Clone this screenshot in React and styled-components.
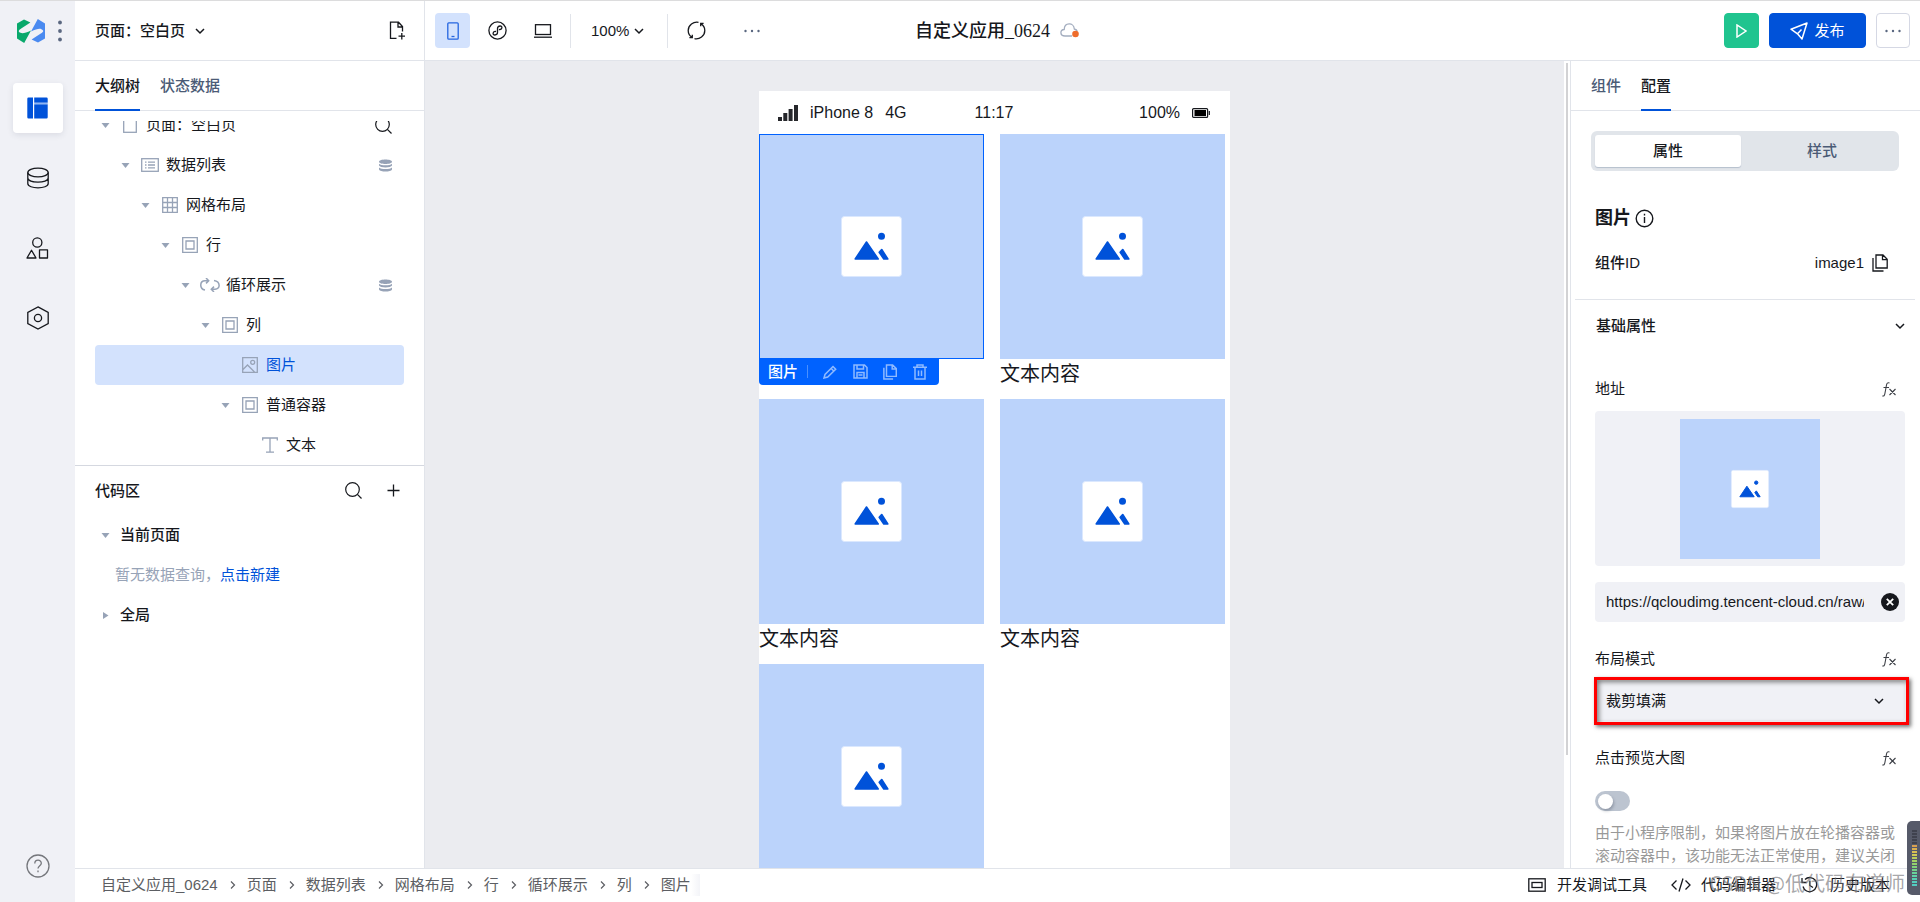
import { useState } from "react";
import styled, { createGlobalStyle } from "styled-components";

const GlobalStyle = createGlobalStyle`
  * {
    box-sizing: border-box;
  }
  body {
    margin: 0;
    font-family: "Liberation Sans", "Noto Sans CJK SC", sans-serif;
    font-size: 15px;
    line-height: 20px;
    color: #16181d;
    background-color: white;
  }
  button, input, select {
    font: inherit;
    color: inherit;
  }
  svg {
    display: block;
    flex-shrink: 0;
  }
`;

const Shell = styled.div`
  display: grid;
  grid-template-columns: 75px minmax(0, 1fr);
  height: 100vh;
  border-top: 1px solid #dcdcdd;
  overflow: hidden;
`;
const Rail = styled.nav`
  display: flex;
  flex-direction: column;
  align-items: center;
  background-color: #f0f1f6;
  padding-bottom: 24px;
`;
const Brand = styled.div`
  display: flex;
  align-items: center;
  align-self: stretch;
  gap: 13px;
  height: 60px;
  padding-left: 17px;
  margin-bottom: 22px;
`;
const RailMenu = styled.div`
  display: flex;
  flex-direction: column;
  gap: 20px;
  flex: 1;
`;
const RailButton = styled.button`
  display: flex;
  align-items: center;
  justify-content: center;
  width: 50px;
  height: 50px;
  padding: 0;
  border: none;
  border-radius: 4px;
  background-color: ${(props) => (props.$active ? "white" : "transparent")};
  box-shadow: ${(props) =>
    props.$active ? "0 2px 6px rgba(30, 40, 70, 0.1)" : "none"};
`;
const PlainButton = styled.button`
  display: flex;
  align-items: center;
  gap: ${(props) => props.$gap || 0}px;
  padding: 0;
  border: none;
  background: none;
  font-weight: ${(props) => (props.$strong ? 500 : 400)};
`;

const Main = styled.div`
  display: flex;
  flex-direction: column;
  min-height: 0;
`;
const Header = styled.header`
  display: flex;
  height: 60px;
  border-bottom: 1px solid #e1e4ea;
`;
const PageBar = styled.div`
  display: flex;
  align-items: center;
  justify-content: space-between;
  width: 350px;
  padding: 0 18px 0 20px;
  border-right: 1px solid #e1e4ea;
`;
const Toolbar = styled.div`
  display: flex;
  align-items: center;
  flex: 1;
  padding: 0 10px;
`;
const Tools = styled.div`
  display: flex;
  align-items: center;
  flex: 1 1 0;
`;
const ToolButton = styled.button`
  display: flex;
  align-items: center;
  justify-content: center;
  width: 35px;
  height: 35px;
  margin-right: ${(props) => props.$after || 10}px;
  padding: 0;
  border: none;
  border-radius: 4px;
  background-color: ${(props) => (props.$active ? "#d3e2fd" : "transparent")};
`;
const Divider = styled.span`
  width: 1px;
  height: 34px;
  margin-right: ${(props) => props.$after}px;
  background-color: #e1e4ea;
`;
const Zoom = styled(PlainButton)`
  margin-right: 23px;
`;
const Title = styled.h1`
  display: flex;
  align-items: center;
  gap: 10px;
  margin: 0;
  font-family: "Liberation Serif", "Noto Sans CJK SC", serif;
  font-size: 18px;
  font-weight: 500;
  line-height: 24px;
`;
const Filler = styled.div`
  flex: 1 1 0;
`;
const Actions = styled.div`
  display: flex;
  align-items: center;
  justify-content: flex-end;
  gap: 10px;
  width: 350px;
  padding-right: 10px;
`;
const ActionButton = styled.button`
  display: flex;
  align-items: center;
  justify-content: center;
  gap: 6px;
  width: ${(props) => props.$width}px;
  height: 35px;
  padding: 0;
  border: 1px solid ${(props) => props.$line || props.$bg};
  border-radius: 4px;
  background-color: ${(props) => props.$bg};
  color: white;
`;

const Body = styled.div`
  display: flex;
  flex: 1;
  min-height: 0;
`;
const Outline = styled.aside`
  display: flex;
  flex-direction: column;
  width: 350px;
  border-right: 1px solid #e1e4ea;
`;
const Tabs = styled.div`
  display: flex;
  flex-shrink: 0;
  gap: 20px;
  height: 50px;
  padding: 0 20px;
  border-bottom: 1px solid #e1e4ea;
`;
const Tab = styled.button`
  height: 50px;
  padding: 2px 0 0;
  border: none;
  border-bottom: 2px solid
    ${(props) => (props.$active ? "#0052d9" : "transparent")};
  background: none;
  font-weight: 500;
  color: ${(props) => (props.$active ? "#16181d" : "#4b5b76")};
`;
const TreePane = styled.div`
  flex: 0 0 355px;
  min-height: 0;
  padding: 10px 20px 0;
  border-bottom: 1px solid #d5d8e0;
`;
const TreeList = styled.div`
  display: flex;
  flex-direction: column;
  justify-content: flex-end;
  height: 100%;
  overflow: hidden;
`;
const TreeRow = styled.div`
  display: flex;
  align-items: center;
  flex: 0 0 40px;
  padding: 0 12px 0 ${(props) => props.$depth * 20}px;
  border-radius: 4px;
  background-color: ${(props) => (props.$active ? "#d3e2fd" : "transparent")};
  color: ${(props) => (props.$active ? "#0052d9" : "#16181d")};
`;
const CaretBox = styled.span`
  display: flex;
  justify-content: center;
  width: 20px;
  margin-right: 5px;
`;
const TreeIcon = styled.span`
  display: flex;
  justify-content: center;
  width: 20px;
  margin-right: 6px;
`;
const TreeLabel = styled.span`
  flex: 1;
`;
const CodePane = styled.div`
  padding: 0 20px;
`;
const CodeHead = styled.div`
  display: flex;
  align-items: center;
  justify-content: space-between;
  height: 49px;
  font-weight: 500;
`;
const CodeTools = styled.div`
  display: flex;
  gap: 25px;
  padding-right: 4px;
`;
const CodeRow = styled.div`
  display: flex;
  align-items: center;
  height: 40px;
  font-weight: 500;
`;
const CodeEmpty = styled.div`
  display: flex;
  align-items: center;
  height: 40px;
  padding-left: 20px;
  color: #97a3b7;
`;
const Link = styled.a`
  color: #0052d9;
  text-decoration: none;
`;

const Canvas = styled.main`
  flex: 1;
  display: flex;
  justify-content: center;
  padding-top: 30px;
  background-color: #ebecf0;
  overflow: hidden;
`;
const Phone = styled.div`
  width: 471px;
  height: max-content;
  min-height: 100%;
  background-color: white;
`;
const StatusBar = styled.div`
  display: grid;
  grid-template-columns: 1fr auto 1fr;
  align-items: center;
  height: 43px;
  padding: 0 20px 0 19px;
  font-size: 16px;
`;
const StatusSide = styled.div`
  display: flex;
  align-items: center;
  justify-content: ${(props) => (props.$end ? "flex-end" : "flex-start")};
  gap: 12px;
`;
const CardGrid = styled.div`
  display: grid;
  grid-template-columns: 1fr 1fr;
  gap: 10px 16px;
  padding-right: 5px;
`;
const Card = styled.div`
  position: relative;
`;
const Picture = styled.div`
  outline: ${(props) => (props.$active ? "1px solid #0062ff" : "none")};
  outline-offset: -1px;
`;
const Caption = styled.div`
  height: 30px;
  font-size: 20px;
  line-height: 30px;
`;
const NodeMenu = styled.div`
  position: absolute;
  left: 0;
  top: 225px;
  display: flex;
  align-items: center;
  width: 180px;
  height: 26px;
  padding: 0 4px 1px 9px;
  border-radius: 0 0 4px 4px;
  background-color: #0062ff;
  color: white;
  font-weight: 500;
  white-space: nowrap;
`;
const NodeMenuLine = styled.span`
  width: 1px;
  height: 13px;
  margin: 0 7px 0 9px;
  background-color: #4a90ff;
`;
const NodeButton = styled.button`
  display: flex;
  justify-content: center;
  width: 30px;
  padding: 0;
  border: none;
  background: none;
`;

const ScrollTrack = styled.div`
  display: flex;
  justify-content: center;
  width: 6px;
  padding-top: 2px;
`;
const ScrollThumb = styled.div`
  width: 2px;
  height: 86%;
  background-color: #d2d2d4;
`;
const Settings = styled.aside`
  width: 350px;
  border-left: 1px solid #e1e4ea;
  overflow: hidden;
`;
const Segment = styled.div`
  display: flex;
  gap: 8px;
  height: 40px;
  margin: 20px 21px 0 20px;
  padding: 4px;
  border-radius: 6px;
  background-color: #e1e5ea;
`;
const SegmentButton = styled.button`
  flex: ${(props) => (props.$active ? "0 0 146px" : "1")};
  padding: 0;
  border: none;
  border-radius: 3px;
  font-weight: 500;
  background-color: ${(props) => (props.$active ? "white" : "transparent")};
  box-shadow: ${(props) => (props.$active ? "0 1px 1px #b5bfcd" : "none")};
  color: ${(props) => (props.$active ? "#16181d" : "#4b5b76")};
`;
const Group = styled.div`
  padding: 0 15px 0 24px;
`;
const ComponentName = styled.h2`
  display: flex;
  align-items: center;
  gap: 4px;
  height: 30px;
  margin: 32px 0 15px;
  font-size: 18px;
  font-weight: 700;
`;
const IdRow = styled.div`
  display: flex;
  align-items: center;
  justify-content: space-between;
  height: 30px;
  margin-bottom: 21px;
  padding-right: 17px;
`;
const Strong = styled.span`
  font-weight: 500;
`;
const SectionHead = styled.div`
  display: flex;
  align-items: center;
  justify-content: space-between;
  height: 53px;
  margin: 0 5px 0 4px;
  padding: 0 10px 0 21px;
  border-top: 1px solid #e1e4ea;
  font-weight: 500;
`;
const FieldHead = styled.div`
  display: flex;
  align-items: center;
  justify-content: space-between;
  height: 30px;
  margin: 22px 0 7px;
  padding-right: 8px;
`;
const Preview = styled.div`
  display: flex;
  justify-content: center;
  height: 155px;
  padding-top: 8px;
  border-radius: 4px;
  background-color: #f0f1f6;
`;
const PreviewPicture = styled.div`
  width: 140px;
`;
const UrlField = styled.div`
  display: flex;
  align-items: center;
  gap: 17px;
  height: 40px;
  margin-top: 16px;
  padding: 0 6px 0 11px;
  border-radius: 4px;
  background-color: #f0f1f6;
`;
const UrlInput = styled.input`
  flex: 1;
  min-width: 0;
  padding: 0;
  border: none;
  outline: none;
  background: none;
`;
const SelectField = styled.div`
  position: relative;
  display: flex;
  align-items: center;
  height: 40px;
  border-radius: 4px;
  background-color: #f0f1f6;
`;
const Select = styled.select`
  appearance: none;
  width: 100%;
  height: 40px;
  padding: 0 40px 0 11px;
  border: none;
  background: none;
`;
const SelectArrow = styled.span`
  position: absolute;
  right: 21px;
  pointer-events: none;
`;
const Highlight = styled.span`
  position: absolute;
  inset: -4px -4px -4px -1px;
  border: 3px solid #ff0000;
  box-shadow: 2px 2px 4px rgba(0, 0, 0, 0.55),
    inset 2px 2px 5px rgba(0, 0, 0, 0.5);
  pointer-events: none;
`;
const Switch = styled.input`
  appearance: none;
  display: flex;
  align-items: center;
  width: 35px;
  height: 20px;
  margin: 18px 0 10px;
  padding: 0 3px;
  border-radius: 10px;
  background-color: ${(props) => (props.checked ? "#0052d9" : "#bcc4d0")};
  justify-content: ${(props) => (props.checked ? "flex-end" : "flex-start")};
  &::before {
    content: "";
    width: 15px;
    height: 15px;
    border-radius: 50%;
    background-color: white;
    box-shadow: 1px 2px 3px rgba(60, 70, 90, 0.35);
  }
`;
const Hint = styled.p`
  margin: 0;
  padding-right: 6px;
  line-height: 23px;
  color: #999;
`;

const Footer = styled.footer`
  position: relative;
  display: flex;
  align-items: center;
  justify-content: space-between;
  flex: 0 0 34px;
  padding: 0 30px 2px 26px;
  border-top: 1px solid #e1e4ea;
`;
const Crumbs = styled.nav`
  display: flex;
  align-items: center;
  gap: 10px;
`;
const Crumb = styled.a`
  color: #5c5e63;
  text-decoration: none;
`;
const CrumbFade = styled.span`
  width: 9px;
  height: 22px;
  margin-left: -10px;
  background: linear-gradient(to right, white, #f3f4f8);
`;
const FooterTools = styled.div`
  display: flex;
  gap: 24px;
`;
const Watermark = styled.span`
  position: absolute;
  right: 15px;
  top: 0;
  font-family: "Noto Sans CJK SC", sans-serif;
  font-size: 20px;
  line-height: 28px;
  color: rgba(110, 110, 114, 0.62);
  pointer-events: none;
`;
const Meter = styled.div`
  position: fixed;
  right: 0;
  bottom: 7px;
  display: flex;
  flex-direction: column;
  align-items: center;
  gap: 1px;
  width: 13px;
  height: 74px;
  padding: 9px 2px 0 4px;
  border-radius: 5px 0 0 5px;
  background-color: #565a69;
`;
const MeterBar = styled.span`
  width: 5px;
  height: 2px;
  background-color: ${(props) => props.$color};
`;

const Svg = ({ w = 20, h = w, box, color = "#16181d", sw = 1.3, children }) => (
  <svg
    width={w}
    height={h}
    viewBox={box || `0 0 ${w} ${h}`}
    fill="none"
    stroke={color}
    strokeWidth={sw}
    aria-hidden="true"
  >
    {children}
  </svg>
);

const muted = "#97a3b7";

const Logo = () => {
  const half =
    "M0 4.6 7 .4 13.4 3.6 4.2 9.4C1.2 11.4 1 12.6 3.6 13.8 5.8 14.8 9 13.6 14 11.4L7.2 24 0 19.6Z";
  return (
    <Svg w={28} h={24} sw={0}>
      <path d={half} fill="#08a86b" />
      <path d={half} fill="#4a8af0" transform="rotate(180 14 12)" />
    </Svg>
  );
};
const Dots = ({ color = "#5a6780", vertical, w = 18 }) => (
  <Svg w={vertical ? 4 : w} h={vertical ? 22 : 4} sw={0}>
    {[0, 1, 2].map((i) =>
      vertical ? (
        <circle key={i} cx="2" cy={2.5 + i * 8.5} r="1.9" fill={color} />
      ) : (
        <circle key={i} cx={w / 2 + (i - 1) * 6.5} cy="2" r="1.2" fill={color} />
      )
    )}
  </Svg>
);
const Chevron = ({ right, color }) => (
  <Svg w={right ? 9 : 10} h={10} sw={right ? 1.2 : 1.5} color={color}>
    <path d={right ? "M3 1.5 6.500 5 3 8.5" : "M1 3 5 7 9 3"} />
  </Svg>
);
const Caret = ({ right }) => (
  <Svg w={9} h={9} sw={0}>
    <path d={right ? "M2 1V8L7.500 4.500Z" : "M.5 2H8.500L4.500 7Z"} fill={muted} />
  </Svg>
);
const SearchIcon = () => (
  <Svg w={17} sw={1.2}>
    <circle cx="7.500" cy="7.500" r="6.800" />
    <path d="M12.400 12.400 16.500 16.500" />
  </Svg>
);
const PlusIcon = () => (
  <Svg w={13} h={17}>
    <path d="M6.500 2.500V14.500M.5 8.500H12.500" />
  </Svg>
);
const StackIcon = () => (
  <Svg w={13} sw={0}>
    <path
      fill={muted}
      d="M0 2.700C0-.3 13-.3 13 2.700S0 5.700 0 2.700ZM0 4.700C2 6.700 11 6.700 13 4.700V6.500C12 9 1 9 0 6.500ZM0 8.600C2 10.600 11 10.600 13 8.600V10.400C12 13.200 1 13.200 0 10.400Z"
    />
  </Svg>
);
const LayoutIcon = () => (
  <Svg w={21} h={22} sw={0}>
    <path
      fill="#0052d9"
      d="M1.500.5H6V21.500H1.500Q.3 21.500.3 20.300V1.700Q.3.5 1.500.5ZM7.200.5H19.500Q20.700.5 20.700 1.700V5.800H7.200ZM7.200 7.200H20.700V20.300Q20.700 21.500 19.500 21.500H7.200Z"
    />
    <path fill="#8fb5f2" d="M7.200 5.800H20.700V7.200H7.200Z" />
  </Svg>
);
const DataIcon = () => (
  <Svg w={22} h={22}>
    <ellipse cx="11" cy="5.500" rx="10.200" ry="4.400" />
    <path d="M.8 5.500V16.500C.8 22.300 21.200 22.300 21.200 16.500V5.500M.8 11C.8 16.500 21.200 16.500 21.200 11" />
  </Svg>
);
const ShapesIcon = () => (
  <Svg w={23} h={22}>
    <circle cx="11.300" cy="5.500" r="4.600" />
    <path d="M5.500 13.200 10 21H1ZM13.500 12.800H21.500V21H13.500Z" strokeLinejoin="round" />
  </Svg>
);
const HexIcon = () => (
  <Svg w={22} h={24}>
    <path d="M11 .9 21.200 6.500V17.500L11 23.100.8 17.500V6.500Z" />
    <circle cx="11" cy="12" r="3.600" />
  </Svg>
);
const HelpIcon = () => (
  <Svg w={24} color="#75777c">
    <circle cx="12" cy="12" r="11" />
    <path d="M8.800 9.600C8.800 5 15.300 5.200 15.300 9.200 15.300 11.600 12 11.800 12 14.600M12 16.500V18.300" />
  </Svg>
);
const NewPageIcon = () => (
  <Svg w={17} h={19}>
    <path d="M7.500 17.300H1.500V1.200H9.500L13.500 5.500V10.500M9 1.200V6H13.500M12.800 12V18.500M9.500 15.200H16" />
  </Svg>
);
const PhoneIcon = () => (
  <Svg w={12} h={18} color="#2465e0">
    <rect x=".8" y=".8" width="10.400" height="16.400" rx="1" />
    <path d="M4.500 14.500H7.500" />
  </Svg>
);
const MiniAppIcon = () => (
  <Svg w={19}>
    <circle cx="9.500" cy="9.500" r="8.600" />
    <path d="M8.100 10.500C5 9.700 3.800 14 6.900 14 8.700 14 9.500 13 9.500 11.600V7.400C9.500 6 10.300 5 12.100 5 15.200 5 14 9.300 10.900 8.500" />
  </Svg>
);
const LaptopIcon = () => (
  <Svg w={18} h={14}>
    <rect x="1.500" y=".7" width="15" height="9.800" />
    <path d="M0 13.200H18" />
  </Svg>
);
const RefreshIcon = () => (
  <Svg w={19}>
    <path d="M11.500 1.300C6.500.3 1.200 4 1.200 9.500 1.200 12.500 2.800 15 5.200 16.400M5.300 13.700V16.600H2.400M7.500 17.700C12.500 18.700 17.800 15 17.800 9.500 17.800 6.500 16.200 4 13.800 2.600M13.700 5.300V2.400H16.600" />
  </Svg>
);
const CloudIcon = () => (
  <Svg w={20} h={15} color="#a3adbf">
    <path d="M12 13H5C-.3 13-.3 6.800 4.200 6.500 4.500-.8 13.800-.8 14.300 6 16 6.300 17 7.300 17.300 8.500" />
    <circle cx="15.500" cy="11" r="3.300" fill="#ee6c2c" stroke="none" />
  </Svg>
);
const PlayIcon = () => (
  <Svg w={11} h={14} color="white" sw={1.5}>
    <path d="M1 1V13L10 7Z" />
  </Svg>
);
const SendIcon = () => (
  <Svg w={18} color="white" sw={1.5}>
    <path d="M1 7.200 17 1 12 17 7.500 11.800ZM7.500 11.800 11.500 7.500M7.500 11.800 1 7.200" strokeLinejoin="round" />
  </Svg>
);
const InfoIcon = () => (
  <Svg w={19} sw={1.4}>
    <circle cx="9.500" cy="9.500" r="8.300" />
    <path d="M9.500 8V14M9.500 4.800V6.500" />
  </Svg>
);
const CopyIcon = ({ color, w = 16, h = 18, sw }) => (
  <Svg w={w} h={h} box="0 0 16 18" color={color} sw={sw}>
    <path d="M4 1H11L15.200 5.200V14H4ZM10.500 1V5.700H15.200M1 4V17H11.500" />
  </Svg>
);
const FxIcon = () => (
  <Svg w={15} h={15} sw={1.1} color="#3c3f46">
    <path d="M7.500 1C5.500.2 4.800 1.300 4.500 3L2.800 12C2.500 13.600 1.800 14.300.3 14M1.500 5.500H7M7.500 7 13.500 13M13.500 7 7.500 13" />
  </Svg>
);
const ClearIcon = () => (
  <Svg w={18} sw={1.8} color="white">
    <circle cx="9" cy="9" r="9" fill="#16181d" stroke="none" />
    <path d="M5.800 5.800 12.200 12.200M12.200 5.800 5.800 12.200" />
  </Svg>
);

const treeIcons = {
  page: (
    <Svg w={14} h={16} color={muted}>
      <rect x=".7" y=".7" width="12.600" height="14.600" />
    </Svg>
  ),
  list: (
    <Svg w={18} h={14} color={muted}>
      <rect x=".7" y=".7" width="16.600" height="12.600" />
      <path d="M4 4.200H5.500M7 4.200H14M4 7H5.500M7 7H14M4 9.800H5.500M7 9.800H14" />
    </Svg>
  ),
  grid: (
    <Svg w={16} color={muted}>
      <path d="M.7.700H15.300V15.300H.7ZM5.500.7V15.300M10.500.7V15.300M.7 5.500H15.300M.7 10.500H15.300" />
    </Svg>
  ),
  box: (
    <Svg w={16} color={muted}>
      <path d="M.7.700H15.300V15.300H.7ZM4 4H12V12H4Z" />
    </Svg>
  ),
  loop: (
    <Svg w={20} h={14} color={muted} sw={1.5}>
      <path d="M5 12C-.8 11-.5 2.700 5 2.700H8.500M6 0 8.700 2.700 6 5.400M14 2.500C20.800 3.500 20.500 11.300 15 11.300H11.500M14 8.600 11.300 11.300 14 14" />
    </Svg>
  ),
  image: (
    <Svg w={16} color={muted}>
      <path d="M.7.700H15.300V15.300H.7ZM1 12.500 5.500 8 12.500 15" />
      <circle cx="10.700" cy="5.300" r="2" />
    </Svg>
  ),
  text: (
    <Svg w={16} color={muted}>
      <path d="M.7 3.500V1H15.300V3.500M8 1V15M4 15.200H12" />
    </Svg>
  ),
};

const MountainImage = () => (
  <svg width="100%" viewBox="0 0 225 225" aria-hidden="true">
    <rect width="225" height="225" fill="#bbd3fb" />
    <rect x="82.500" y="82.500" width="60" height="60" rx="3" fill="white" stroke="#dbe8fe" />
    <g fill="#0052d9" stroke="#0052d9" strokeWidth="1.600" strokeLinejoin="round">
      <path d="M107.500 108 119.200 125H96.200Z" />
      <path d="M122.700 115.500 128.800 125H124.800L120.200 118.300Z" />
      <circle cx="122.500" cy="102.300" r="2.700" />
    </g>
  </svg>
);

const tree = [
  { icon: "page", label: "页面：空白页", extra: "search" },
  { icon: "list", label: "数据列表", extra: "data" },
  { icon: "grid", label: "网格布局" },
  { icon: "box", label: "行" },
  { icon: "loop", label: "循环展示", extra: "data" },
  { icon: "box", label: "列" },
  { icon: "image", label: "图片", leaf: true },
  { icon: "box", label: "普通容器", depth: 6 },
  { icon: "text", label: "文本", depth: 7, leaf: true },
];
const crumbs = ["自定义应用_0624", "页面", "数据列表", "网格布局", "行", "循环展示", "列", "图片"];
const cards = ["", "文本内容", "文本内容", "文本内容", "文本内容"];
const meterColors = [
  "#3f424e", "#3f424e", "#3f424e", "#3f424e", "#3f424e", "#d9a050", "#dcb050",
  "#d8c052", "#cfcb55", "#b9d05c", "#a4d264", "#92d26d", "#82d27a", "#74d28a",
  "#68d29a", "#60d2a8", "#58d0b4", "#54cebc", "#52ccc0",
];
const menuBlue = "#8fbaff";

const FieldLabel = ({ children, htmlFor }) => (
  <FieldHead>
    <label htmlFor={htmlFor}>{children}</label>
    <PlainButton aria-label="表达式">
      <FxIcon />
    </PlainButton>
  </FieldHead>
);

const SideRail = () => (
  <Rail>
    <Brand>
      <Logo />
      <Dots vertical />
    </Brand>
    <RailMenu>
      <RailButton $active aria-label="页面">
        <LayoutIcon />
      </RailButton>
      <RailButton aria-label="数据">
        <DataIcon />
      </RailButton>
      <RailButton aria-label="组件">
        <ShapesIcon />
      </RailButton>
      <RailButton aria-label="设置">
        <HexIcon />
      </RailButton>
    </RailMenu>
    <PlainButton aria-label="帮助">
      <HelpIcon />
    </PlainButton>
  </Rail>
);

const TopBar = () => (
  <Header>
    <PageBar>
      <PlainButton $gap={10} $strong>
        页面：空白页
        <Chevron />
      </PlainButton>
      <PlainButton aria-label="新建页面">
        <NewPageIcon />
      </PlainButton>
    </PageBar>
    <Toolbar>
      <Tools>
        <ToolButton $active aria-label="手机">
          <PhoneIcon />
        </ToolButton>
        <ToolButton aria-label="小程序">
          <MiniAppIcon />
        </ToolButton>
        <ToolButton aria-label="电脑">
          <LaptopIcon />
        </ToolButton>
        <Divider $after={20} />
        <Zoom $gap={5}>
          100%
          <Chevron />
        </Zoom>
        <Divider $after={11} />
        <ToolButton $after={20} aria-label="刷新">
          <RefreshIcon />
        </ToolButton>
        <ToolButton aria-label="更多">
          <Dots />
        </ToolButton>
      </Tools>
      <Title>
        自定义应用_0624
        <CloudIcon />
      </Title>
      <Filler />
    </Toolbar>
    <Actions>
      <ActionButton $width={35} $bg="#20c48f" aria-label="预览">
        <PlayIcon />
      </ActionButton>
      <ActionButton $width={97} $bg="#0052d9">
        <SendIcon />
        发布
      </ActionButton>
      <ActionButton $width={34} $bg="white" $line="#d5d8e4" aria-label="更多">
        <Dots />
      </ActionButton>
    </Actions>
  </Header>
);

const OutlinePanel = () => (
  <Outline>
    <Tabs>
      <Tab $active>大纲树</Tab>
      <Tab>状态数据</Tab>
    </Tabs>
    <TreePane>
      <TreeList>
        {tree.map((node, i) => (
          <TreeRow
            key={i}
            $depth={node.depth ?? i}
            $active={node.label === "图片"}
          >
            <CaretBox>{!node.leaf && <Caret />}</CaretBox>
            <TreeIcon>{treeIcons[node.icon]}</TreeIcon>
            <TreeLabel>{node.label}</TreeLabel>
            {node.extra === "data" && <StackIcon />}
            {node.extra === "search" && <SearchIcon />}
          </TreeRow>
        ))}
      </TreeList>
    </TreePane>
    <CodePane>
      <CodeHead>
        代码区
        <CodeTools>
          <PlainButton aria-label="搜索">
            <SearchIcon />
          </PlainButton>
          <PlainButton aria-label="新建">
            <PlusIcon />
          </PlainButton>
        </CodeTools>
      </CodeHead>
      <CodeRow>
        <CaretBox>
          <Caret />
        </CaretBox>
        当前页面
      </CodeRow>
      <CodeEmpty>
        暂无数据查询，
        <Link href="#new">点击新建</Link>
      </CodeEmpty>
      <CodeRow>
        <CaretBox>
          <Caret right />
        </CaretBox>
        全局
      </CodeRow>
    </CodePane>
  </Outline>
);

const SelectedMenu = () => (
  <NodeMenu>
    图片
    <NodeMenuLine />
    <NodeButton aria-label="编辑">
      <Svg w={14} color={menuBlue} sw={1.5}>
        <path d="M1 13 2 9.500 10 1.500 12.700 4.200 4.700 12ZM8.200 3.500 10.700 6" />
      </Svg>
    </NodeButton>
    <NodeButton aria-label="保存">
      <Svg w={15} color={menuBlue} sw={1.5}>
        <path d="M1 1H11.500L14 3.500V14H1ZM4 1V5H10.500V1M4 14V8.500H11V14M5.500 11H9.500" />
      </Svg>
    </NodeButton>
    <NodeButton aria-label="复制">
      <CopyIcon color={menuBlue} w={14} h={16} sw={1.7} />
    </NodeButton>
    <NodeButton aria-label="删除">
      <Svg w={14} h={16} color={menuBlue} sw={1.5}>
        <path d="M0 3.300H14M4 3V1H10V3M2 3.500V15H12V3.500M5.500 6.500V12M8.500 6.500V12" />
      </Svg>
    </NodeButton>
  </NodeMenu>
);

const PhoneCanvas = () => (
  <Canvas>
    <Phone>
      <StatusBar>
        <StatusSide>
          <Svg w={20} h={16} sw={0}>
            <path fill="#26272b" d="M0 12H4V16H0ZM5.300 8H9.300V16H5.300ZM10.600 4H14.600V16H10.600ZM16 0H20V16H16Z" />
          </Svg>
          <span>iPhone 8</span>
          <span>4G</span>
        </StatusSide>
        <span>11:17</span>
        <StatusSide $end>
          <span>100%</span>
          <Svg w={18} h={10} sw={1.2}>
            <rect x=".6" y=".6" width="15" height="8.800" rx="1" />
            <rect x="2.500" y="2" width="11.500" height="6" fill="#000" stroke="none" />
            <path d="M17.300 3V7" />
          </Svg>
        </StatusSide>
      </StatusBar>
      <CardGrid>
        {cards.map((text, i) => (
          <Card key={i}>
            <Picture $active={i === 0}>
              <MountainImage />
            </Picture>
            <Caption>{text}</Caption>
            {i === 0 && <SelectedMenu />}
          </Card>
        ))}
      </CardGrid>
    </Phone>
  </Canvas>
);

const SettingsPanel = () => {
  const [url, setUrl] = useState(
    "https://qcloudimg.tencent-cloud.cn/raw/image.png"
  );
  const [mode, setMode] = useState("裁剪填满");
  const [preview, setPreview] = useState(false);

  return (
    <Settings>
      <Tabs>
        <Tab>组件</Tab>
        <Tab $active>配置</Tab>
      </Tabs>
      <Segment>
        <SegmentButton $active>属性</SegmentButton>
        <SegmentButton>样式</SegmentButton>
      </Segment>
      <Group>
        <ComponentName>
          图片
          <InfoIcon />
        </ComponentName>
        <IdRow>
          <Strong>组件ID</Strong>
          <PlainButton $gap={8}>
            image1
            <CopyIcon />
          </PlainButton>
        </IdRow>
      </Group>
      <SectionHead>
        基础属性
        <Chevron />
      </SectionHead>
      <Group>
        <FieldLabel htmlFor="url">地址</FieldLabel>
        <Preview>
          <PreviewPicture>
            <MountainImage />
          </PreviewPicture>
        </Preview>
        <UrlField>
          <UrlInput
            id="url"
            type="text"
            value={url}
            onChange={(e) => setUrl(e.target.value)}
          />
          <PlainButton aria-label="清空" onClick={() => setUrl("")}>
            <ClearIcon />
          </PlainButton>
        </UrlField>
        <FieldLabel htmlFor="mode">布局模式</FieldLabel>
        <SelectField>
          <Select
            id="mode"
            value={mode}
            onChange={(e) => setMode(e.target.value)}
          >
            <option>裁剪填满</option>
          </Select>
          <SelectArrow>
            <Chevron />
          </SelectArrow>
          <Highlight />
        </SelectField>
        <FieldLabel htmlFor="preview">点击预览大图</FieldLabel>
        <Switch
          id="preview"
          type="checkbox"
          checked={preview}
          onChange={() => setPreview(!preview)}
        />
        <Hint>
          由于小程序限制，如果将图片放在轮播容器或滚动容器中，该功能无法正常使用，建议关闭
        </Hint>
      </Group>
    </Settings>
  );
};

const BottomBar = () => (
  <Footer>
    <Crumbs>
      {crumbs.map((name, i) => [
        i > 0 && <Chevron key={`sep${i}`} right color="#5c5e63" />,
        <Crumb key={name} href="#crumb">
          {name}
        </Crumb>,
      ])}
      <CrumbFade />
    </Crumbs>
    <FooterTools>
      <PlainButton $gap={11}>
        <Svg w={18} h={14} sw={1.3}>
          <rect x=".8" y=".8" width="16.400" height="12.400" />
          <rect x="4" y="4.500" width="10" height="5" />
        </Svg>
        开发调试工具
      </PlainButton>
      <PlainButton $gap={10}>
        <Svg w={20} h={14}>
          <path d="M5.500 2.500 1 7 5.500 11.500M14.500 2.500 19 7 14.500 11.500M12 .5 8 13.500" />
        </Svg>
        代码编辑器
      </PlainButton>
      <PlainButton $gap={11}>
        <Svg w={19} h={17}>
          <path d="M5 3.500C8 .5 13 1 15.500 4.500 18 8.500 16 13.500 12.500 15 8.500 17 4 14.500 3 10.500M2 2V6.500H6.500M9.800 5V9.500L13 11.500" />
        </Svg>
        历史版本
      </PlainButton>
    </FooterTools>
    <Watermark>CSDN @低代码布道师</Watermark>
  </Footer>
);

export default function App() {
  return (
    <>
      <GlobalStyle />
      <Shell>
        <SideRail />
        <Main>
          <TopBar />
          <Body>
            <OutlinePanel />
            <PhoneCanvas />
            <ScrollTrack>
              <ScrollThumb />
            </ScrollTrack>
            <SettingsPanel />
          </Body>
          <BottomBar />
        </Main>
      </Shell>
      <Meter>
        {meterColors.map((color, i) => (
          <MeterBar key={i} $color={color} />
        ))}
      </Meter>
    </>
  );
}
